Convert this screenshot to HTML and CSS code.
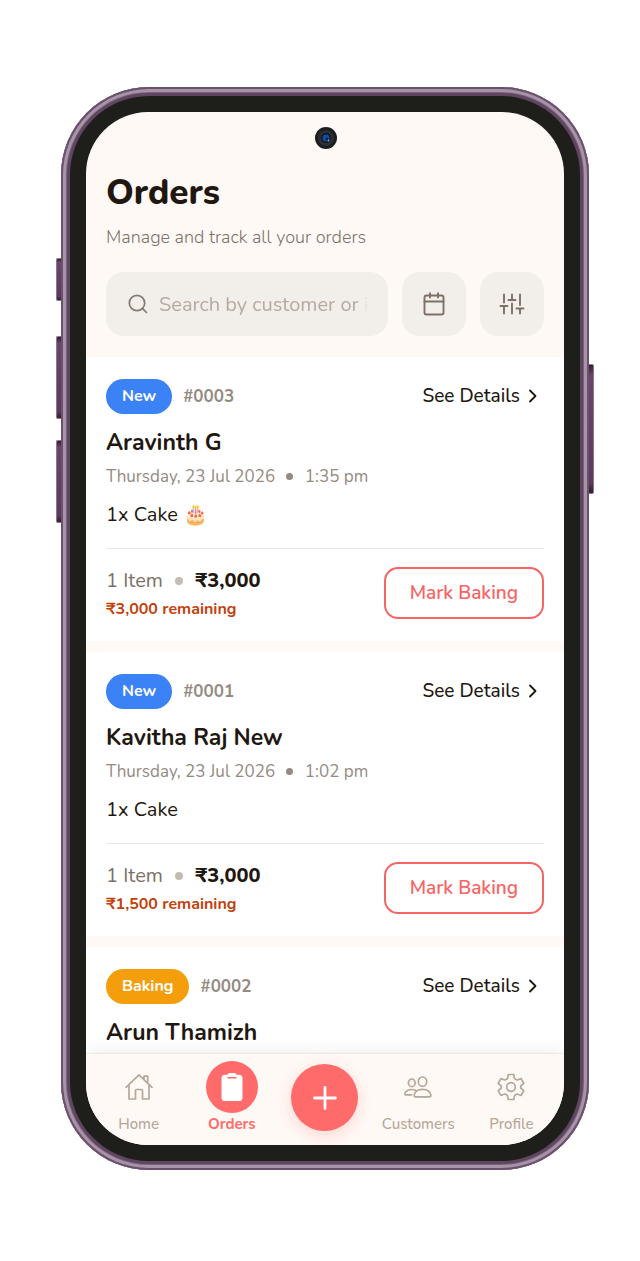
FILE: index.html
```html
<!DOCTYPE html>
<html lang="en">
<head>
<meta charset="UTF-8">
<meta name="viewport" content="width=device-width, initial-scale=1.0">
<title>Orders</title>
<link rel="stylesheet" href="styles.css">
</head>
<body>
<div class="phone">
    <span class="side-key key-mute"></span>
    <span class="side-key key-up"></span>
    <span class="side-key key-down"></span>
    <span class="side-key key-power"></span>
    <div class="bezel">
        <div class="screen">
            <svg class="camera" viewBox="0 0 22 22" aria-hidden="true">
                <circle cx="11" cy="11" r="11" fill="#1b1d1f"/>
                <circle cx="11" cy="11" r="8" fill="#2c2f32"/>
                <circle cx="11" cy="11" r="5" fill="#101722"/>
                <circle cx="11" cy="11" r="3.500" fill="#0d4fa8"/>
                <circle cx="12" cy="12" r="1.400" fill="#0b1a30"/>
                <circle cx="13.500" cy="13.500" r=".9" fill="#8fa6bd"/>
            </svg>

            <header class="header">
                <h1>Orders</h1>
                <p class="subtitle">Manage and track all your orders</p>
                <div class="tools">
                    <label class="search">
                        <svg width="20" height="20" viewBox="0 0 20 20" fill="none" stroke="currentColor" stroke-width="1.700" stroke-linecap="round">
                            <circle cx="9" cy="9" r="7.700"/>
                            <path d="M14.600 14.600L18.500 18.500"/>
                        </svg>
                        <input type="text" placeholder="Search by customer or item" aria-label="Search orders">
                    </label>
                    <button class="tool" aria-label="Pick a date">
                        <svg width="24" height="24" viewBox="0 0 24 24" fill="none" stroke="currentColor" stroke-width="1.900" stroke-linecap="round" stroke-linejoin="round">
                            <rect x="2.500" y="3.500" width="19" height="19" rx="2"/>
                            <path d="M8 1.200v4.300M16 1.200v4.300M2.500 9.500h19"/>
                        </svg>
                    </button>
                    <button class="tool" aria-label="Filters">
                        <svg width="26" height="24" viewBox="0 0 26 24" fill="none" stroke="currentColor" stroke-width="1.900" stroke-linecap="round">
                            <path d="M5 2.500v8M5 14v7.500M1.500 14h7M13 2.500v5.500M13 11.500v10M9.500 8h7M21 2.500v10.500M21 16.500v5M17.500 16.500h7"/>
                        </svg>
                    </button>
                </div>
            </header>

            <main class="orders">
                <article class="order">
                    <div class="order-top">
                        <span class="badge badge-new">New</span>
                        <span class="order-id">#0003</span>
                        <a class="details" href="#">See Details
                            <svg width="10" height="14" viewBox="0 0 10 14" fill="none" stroke="currentColor" stroke-width="1.800" stroke-linecap="round" stroke-linejoin="round"><path d="M2 1.500L7.500 7L2 12.500"/></svg>
                        </a>
                    </div>
                    <h2>Aravinth G</h2>
                    <p class="date">Thursday, 23 Jul 2026 <i class="dot"></i> 1:35 pm</p>
                    <p class="items">1x Cake 🎂</p>
                    <div class="order-bottom">
                        <div class="summary">
                            <p class="total">1 Item <i class="dot"></i> <b>₹3,000</b></p>
                            <p class="remaining">₹3,000 remaining</p>
                        </div>
                        <button class="mark">Mark Baking</button>
                    </div>
                </article>

                <article class="order">
                    <div class="order-top">
                        <span class="badge badge-new">New</span>
                        <span class="order-id">#0001</span>
                        <a class="details" href="#">See Details
                            <svg width="10" height="14" viewBox="0 0 10 14" fill="none" stroke="currentColor" stroke-width="1.800" stroke-linecap="round" stroke-linejoin="round"><path d="M2 1.500L7.500 7L2 12.500"/></svg>
                        </a>
                    </div>
                    <h2>Kavitha Raj New</h2>
                    <p class="date">Thursday, 23 Jul 2026 <i class="dot"></i> 1:02 pm</p>
                    <p class="items">1x Cake</p>
                    <div class="order-bottom">
                        <div class="summary">
                            <p class="total">1 Item <i class="dot"></i> <b>₹3,000</b></p>
                            <p class="remaining">₹1,500 remaining</p>
                        </div>
                        <button class="mark">Mark Baking</button>
                    </div>
                </article>

                <article class="order">
                    <div class="order-top">
                        <span class="badge badge-baking">Baking</span>
                        <span class="order-id">#0002</span>
                        <a class="details" href="#">See Details
                            <svg width="10" height="14" viewBox="0 0 10 14" fill="none" stroke="currentColor" stroke-width="1.800" stroke-linecap="round" stroke-linejoin="round"><path d="M2 1.500L7.500 7L2 12.500"/></svg>
                        </a>
                    </div>
                    <h2>Arun Thamizh</h2>
                </article>
            </main>

            <nav class="nav">
                <a class="nav-item" href="#">
                    <span class="nav-icon">
                        <svg width="28" height="28" viewBox="0 0 28 28" fill="none" stroke="currentColor" stroke-width="1.700" stroke-linecap="round" stroke-linejoin="round">
                            <path d="M1 14.300L14 1.800L27 14.300M4 12V26h6.500v-8.500a1 1 0 0 1 1-1h5a1 1 0 0 1 1 1V26H24V12M19 6.300V3.200h3.700v6.500"/>
                        </svg>
                    </span>
                    Home
                </a>
                <a class="nav-item active" href="#">
                    <span class="nav-icon">
                        <svg width="22" height="28" viewBox="0 0 22 28">
                            <path d="M4 1.800h2.500Q7.200 0 8.500 0h5q1.300 0 2 1.800H18a3.500 3.500 0 0 1 3.500 3.500V24.500A3.500 3.500 0 0 1 18 28H4a3.500 3.500 0 0 1-3.500-3.500V5.300A3.500 3.500 0 0 1 4 1.800z" fill="#fff"/>
                            <path d="M7 4.800h8" stroke="#ff6b6b" stroke-width="1.400" stroke-linecap="round"/>
                        </svg>
                    </span>
                    Orders
                </a>
                <button class="add" aria-label="New order">
                    <svg width="24" height="24" viewBox="0 0 24 24" fill="none" stroke="#fff" stroke-width="2.800" stroke-linecap="round"><path d="M12 1.500v21M1.500 12h21"/></svg>
                </button>
                <a class="nav-item" href="#">
                    <span class="nav-icon">
                        <svg width="28" height="22" viewBox="0 0 28 22" fill="none" stroke="currentColor" stroke-width="1.700" stroke-linecap="round" stroke-linejoin="round">
                            <ellipse cx="18.500" cy="5.700" rx="4.200" ry="4.700"/>
                            <ellipse cx="7.800" cy="6.900" rx="3.400" ry="3.700"/>
                            <path d="M18.500 13.300c4.400 0 7.800 2.300 8.400 6 .1.800-.3 1.500-1.100 1.500H11.200c-.8 0-1.200-.7-1.100-1.500.6-3.700 4-6 8.400-6zM11.500 14.300c-1-.5-2.300-.8-3.700-.8-3.400 0-6.300 1.700-6.900 4.200-.1.700.2 1.200.9 1.200h5.700"/>
                        </svg>
                    </span>
                    Customers
                </a>
                <a class="nav-item" href="#">
                    <span class="nav-icon">
                        <svg width="28" height="28" viewBox="0 0 28 28" fill="none" stroke="currentColor" stroke-width="1.700" stroke-linejoin="round">
                            <path d="M11.200 1.500h5.600l.6 3.400q.2.700.9 1.100l1.200.7q.7.400 1.400.1l3.200-1.200 2.700 4.700-2.600 2.200q-.6.500-.6 1.500t.6 1.500l2.600 2.200-2.700 4.700-3.200-1.200q-.7-.3-1.400.1l-1.200.7q-.7.400-.9 1.100l-.6 3.400h-5.600l-.6-3.400q-.2-.7-.9-1.100l-1.200-.7q-.7-.4-1.400-.1l-3.200 1.200-2.700-4.700 2.600-2.200q.6-.5.600-1.500t-.6-1.500L1.200 10.300l2.700-4.700 3.200 1.200q.7.300 1.400-.1l1.200-.7q.7-.4.900-1.100z"/>
                            <circle cx="14" cy="14" r="4.300"/>
                        </svg>
                    </span>
                    Profile
                </a>
            </nav>
        </div>
    </div>
</div>
</body>
</html>
```
FILE: styles.css
```css
* {
    box-sizing: border-box;
}
body {
    margin: 0;
    padding: 87px 51px 91px 61px;
    height: 100vh;
    display: flex;
    justify-content: center;
    background-color: #fff;
    color: #1f1710;
    font-family: Nunito, Lato, "Open Sans", sans-serif;
}
h1, h2, p {
    margin: 0;
}
button, input {
    font-family: inherit;
}
button {
    cursor: pointer;
}
a {
    color: inherit;
    text-decoration: none;
}

/* phone shell */
.phone {
    position: relative;
    flex: 1;
    min-width: 0;
    max-width: 560px;
    display: flex;
    padding: 9px;
    border-radius: 88px;
    background-color: #5f455f;
    box-shadow: inset 0 0 0 2px #6c506d, inset 0 0 0 5px #a595a6, inset 0 0 0 6px #7b617c;
}
.side-key {
    position: absolute;
    left: -5px;
    width: 5px;
    height: 83px;
    border: 1px solid #8d768e;
    border-right: none;
    border-radius: 2px 0 0 2px;
    background: linear-gradient(#2f1f30, #68466a 8%, #5a3a5c 92%, #2f1f30);
}
.key-mute {
    top: 171px;
    height: 43px;
}
.key-up {
    top: 249px;
}
.key-down {
    top: 353px;
}
.key-power {
    top: 277px;
    left: auto;
    right: -5px;
    height: 130px;
    border: 1px solid #8d768e;
    border-left: none;
    border-radius: 0 2px 2px 0;
}
.bezel {
    flex: 1;
    min-width: 0;
    display: flex;
    padding: 16px;
    border-radius: 79px;
    background-color: #1e1e1b;
}
.screen {
    position: relative;
    flex: 1;
    min-width: 0;
    display: flex;
    flex-direction: column;
    overflow: hidden;
    border-radius: 62px;
    background-color: #fff9f5;
}
.camera {
    position: absolute;
    top: 15px;
    left: 50%;
    width: 22px;
    height: 22px;
    margin-left: -10px;
}

/* header */
.header {
    padding: 58px 20px 21px;
}
h1 {
    font-size: 35px;
    line-height: 46px;
    font-weight: 800;
}
.subtitle {
    margin-top: 9px;
    font-size: 18px;
    line-height: 24px;
    font-weight: 300;
    color: #7d7269;
}
.tools {
    display: flex;
    gap: 14px;
    margin-top: 23px;
}
.search {
    flex: 1;
    min-width: 0;
    display: flex;
    align-items: center;
    gap: 11px;
    height: 64px;
    padding: 0 20px 0 22px;
    border-radius: 18px;
    background-color: #f2efea;
    color: #857a70;
}
.search svg {
    flex: none;
}
.search input {
    width: 100%;
    min-width: 0;
    padding: 2px 0 0;
    border: none;
    outline: none;
    background: none;
    font-size: 20px;
    line-height: 28px;
    color: #1f1710;
    -webkit-mask-image: linear-gradient(to left, transparent, #000 12px);
    mask-image: linear-gradient(to left, transparent, #000 12px);
}
.search input::placeholder {
    color: #b5aaa0;
    opacity: 1;
}
.tool {
    display: flex;
    align-items: center;
    justify-content: center;
    width: 64px;
    height: 64px;
    padding: 0;
    border: none;
    border-radius: 18px;
    background-color: #f2efea;
    color: #7d7067;
}

/* order list */
.orders {
    flex: 1;
    min-height: 0;
    overflow: hidden;
}
.order {
    margin-bottom: 11px;
    padding: 21px 20px 20px;
    background-color: #fff;
}
.order-top {
    display: flex;
    align-items: center;
    gap: 11px;
    height: 36px;
}
.badge {
    padding: 0 16px;
    border-radius: 18px;
    font-size: 16px;
    line-height: 35px;
    font-weight: 700;
    color: #fff;
}
.badge-new {
    background-color: #3b82f6;
}
.badge-baking {
    background-color: #f59e0b;
}
.order-id {
    font-size: 17px;
    font-weight: 700;
    color: #948a82;
}
.details {
    display: flex;
    align-items: center;
    gap: 8px;
    margin-left: auto;
    padding-right: 6px;
    font-size: 19px;
    font-weight: 500;
}
h2 {
    margin-top: 13px;
    font-size: 23px;
    line-height: 32px;
    font-weight: 700;
}
.date {
    margin-top: 6px;
    font-size: 17px;
    line-height: 24px;
    color: #948a82;
}
.dot {
    display: inline-block;
    width: 7px;
    height: 7px;
    margin: 0 7px;
    border-radius: 50%;
    vertical-align: 2px;
    background-color: #948a82;
}
.items {
    margin-top: 12px;
    font-size: 20px;
    line-height: 28px;
}
.order-bottom {
    display: flex;
    align-items: center;
    justify-content: space-between;
    margin-top: 19px;
    padding-top: 16px;
    border-top: 1px solid #ebe6e1;
}
.total {
    font-size: 20px;
    line-height: 32px;
    color: #7d7067;
}
.total .dot {
    width: 8px;
    height: 8px;
    background-color: #c5bbb1;
}
.total b {
    font-weight: 800;
    color: #1f1710;
}
.remaining {
    font-size: 16px;
    line-height: 24px;
    font-weight: 700;
    color: #c2410c;
}
.mark {
    height: 52px;
    padding: 0 24px;
    border: 2px solid #f86464;
    border-radius: 14px;
    background-color: #fff;
    font-size: 19px;
    font-weight: 600;
    color: #f86464;
}

/* bottom navigation */
.nav {
    position: relative;
    display: grid;
    grid-template-columns: repeat(5, 1fr);
    padding: 7px 6px 10px;
    background-color: #fff9f5;
    box-shadow: 0 -1px 1px rgba(60, 30, 10, 0.06), 0 -4px 16px rgba(0, 0, 0, 0.06);
}
.nav-item {
    display: flex;
    flex-direction: column;
    align-items: center;
    font-size: 15px;
    line-height: 22px;
    font-weight: 500;
    color: #b5a799;
}
.nav-icon {
    display: flex;
    align-items: center;
    justify-content: center;
    width: 52px;
    height: 52px;
    border-radius: 50%;
}
.active {
    font-weight: 700;
    color: #ff6b6b;
}
.active .nav-icon {
    background-color: #ff6b6b;
}
.add {
    display: flex;
    align-items: center;
    justify-content: center;
    justify-self: center;
    width: 67px;
    height: 67px;
    margin-top: 3px;
    padding: 0;
    border: none;
    border-radius: 50%;
    background-color: #ff6b6b;
    box-shadow: 0 4px 16px rgba(255, 107, 107, 0.25);
}
```
